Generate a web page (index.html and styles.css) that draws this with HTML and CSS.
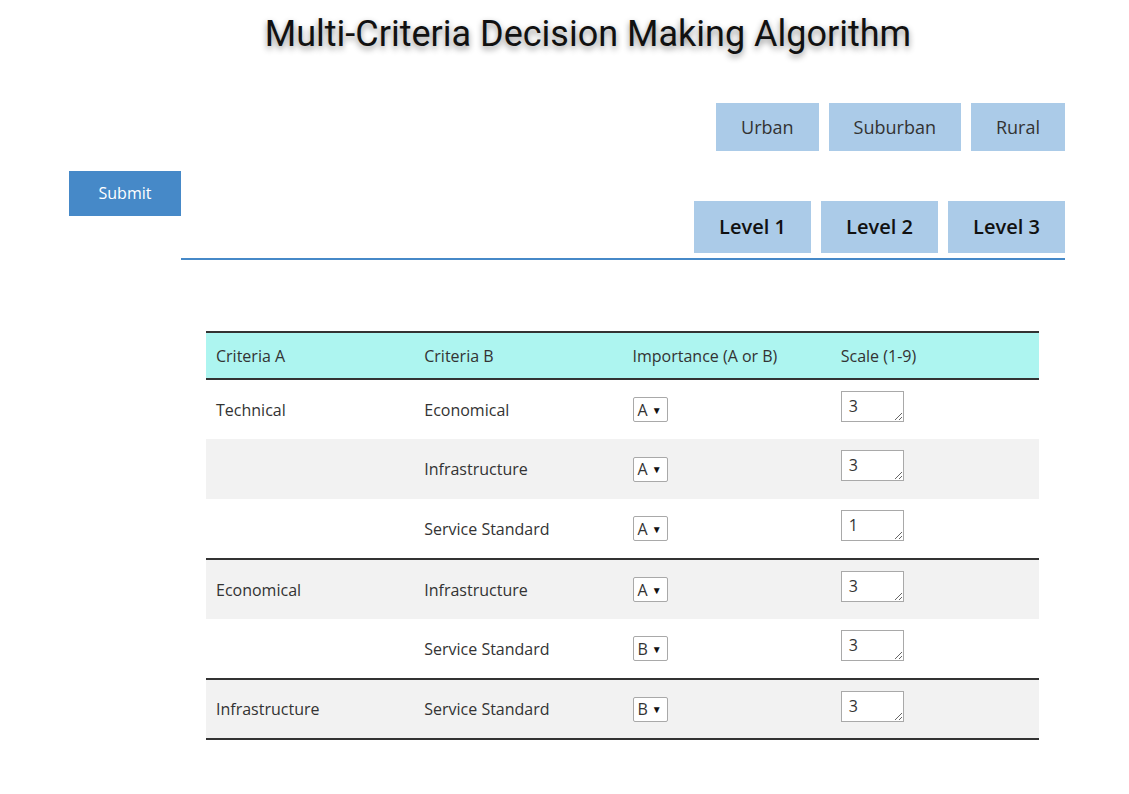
FILE: index.html
```html
<!DOCTYPE html>
<html>
<head>
<meta charset="utf-8">
<link rel="stylesheet" href="styles.css">
</head>
<body>
<h1 class="title">Multi-Criteria Decision Making Algorithm</h1>
<div class="regions">
  <button class="region">Urban</button>
  <button class="region">Suburban</button>
  <button class="region">Rural</button>
</div>
<div class="control-row">
  <button class="submit">Submit</button>
  <div class="tabs">
    <button class="tab">Level 1</button>
    <button class="tab">Level 2</button>
    <button class="tab">Level 3</button>
  </div>
</div>
<table class="grid">
  <thead>
    <tr><th>Criteria A</th><th>Criteria B</th><th>Importance (A or B)</th><th>Scale (1-9)</th></tr>
  </thead>
  <tbody>
    <tr class="odd"><td>Technical</td><td>Economical</td><td><span class="select">A<span class="arrow">▼</span></span></td><td class="scale-cell"><textarea class="scale">3</textarea></td></tr>
    <tr class="even"><td></td><td>Infrastructure</td><td><span class="select">A<span class="arrow">▼</span></span></td><td class="scale-cell"><textarea class="scale">3</textarea></td></tr>
    <tr class="odd"><td></td><td>Service Standard</td><td><span class="select">A<span class="arrow">▼</span></span></td><td class="scale-cell"><textarea class="scale">1</textarea></td></tr>
  </tbody>
  <tbody>
    <tr class="even"><td>Economical</td><td>Infrastructure</td><td><span class="select">A<span class="arrow">▼</span></span></td><td class="scale-cell"><textarea class="scale">3</textarea></td></tr>
    <tr class="odd"><td></td><td>Service Standard</td><td><span class="select">B<span class="arrow">▼</span></span></td><td class="scale-cell"><textarea class="scale">3</textarea></td></tr>
  </tbody>
  <tbody>
    <tr class="even"><td>Infrastructure</td><td>Service Standard</td><td><span class="select">B<span class="arrow">▼</span></span></td><td class="scale-cell"><textarea class="scale">3</textarea></td></tr>
  </tbody>
</table>
</body>
</html>
```
FILE: styles.css
```css
html, body {
  margin: 0;
  padding: 0;
  background: #ffffff;
}
body {
  font-family: "Open Sans", "Liberation Sans", sans-serif;
  color: #333;
  width: 1129px;
}
.title {
  font-family: Roboto, "Liberation Sans", sans-serif;
  font-weight: 400;
  font-size: 36px;
  line-height: 42px;
  color: #111;
  text-align: center;
  margin: 13px 0 0 0;
  padding-left: 47px;
  text-shadow: 0 3px 6px rgba(0, 0, 0, 0.45);
}
.regions {
  display: flex;
  justify-content: flex-end;
  gap: 10px;
  margin: 48px 64px 0 0;
}
.region {
  font-family: "Open Sans", "Liberation Sans", sans-serif;
  font-size: 18px;
  color: #333;
  background: #abcbe8;
  border: none;
  height: 48px;
  padding: 0 25px;
  margin: 0;
}
.control-row {
  display: flex;
  align-items: flex-start;
  margin: 20px 64px 0 69px;
}
.submit {
  font-family: "Open Sans", "Liberation Sans", sans-serif;
  font-size: 16px;
  color: #fff;
  background: #4689c8;
  border: none;
  width: 112px;
  height: 45px;
  padding: 0 0 2px 0;
  margin: 0;
}
.tabs {
  flex: 1;
  display: flex;
  justify-content: flex-end;
  gap: 10px;
  padding: 30px 0 5px 0;
  border-bottom: 2px solid #4689c8;
}
.tab {
  font-family: "Open Sans", "Liberation Sans", sans-serif;
  font-size: 20px;
  font-weight: 600;
  color: #111;
  background: #abcbe8;
  border: none;
  width: 117px;
  height: 52px;
  padding: 0 0 2px 0;
  margin: 0;
}
.grid {
  margin: 71px 0 0 206px;
  width: 833px;
  border-collapse: collapse;
  table-layout: fixed;
  font-size: 16px;
  color: #333;
}
.grid thead tr {
  background: #adf5f0;
  height: 47px;
}
.grid thead {
  border-top: 2px solid #333;
  border-bottom: 2px solid #333;
}
.grid tbody {
  border-bottom: 2px solid #333;
}
.grid tbody tr {
  height: 60px;
}
.grid th {
  font-weight: 400;
  text-align: left;
  padding: 0 10px;
}
.grid td {
  padding: 0 10px;
  vertical-align: middle;
}
.grid td.scale-cell {
  vertical-align: top;
  padding-top: 11px;
}
.grid tr.even {
  background: #f2f2f2;
}
.grid tr.odd {
  background: #fff;
}
.select {
  display: inline-flex;
  align-items: center;
  box-sizing: border-box;
  width: 35px;
  height: 25px;
  border: 1px solid #a9a9a9;
  border-radius: 2px;
  background: #fff;
  padding: 0 0 0 4px;
  font-size: 16px;
  color: #333;
  vertical-align: middle;
}
.arrow {
  font-size: 10px;
  margin-left: 4px;
  color: #111;
}
.scale {
  display: block;
  box-sizing: border-box;
  width: 63px;
  height: 31px;
  border: 1px solid #a9a9a9;
  padding: 3px 7px 1px 7px;
  font-family: "Open Sans", "Liberation Sans", sans-serif;
  font-size: 16px;
  line-height: 22px;
  color: #333;
  margin: 0;
  overflow: hidden;
}
```
